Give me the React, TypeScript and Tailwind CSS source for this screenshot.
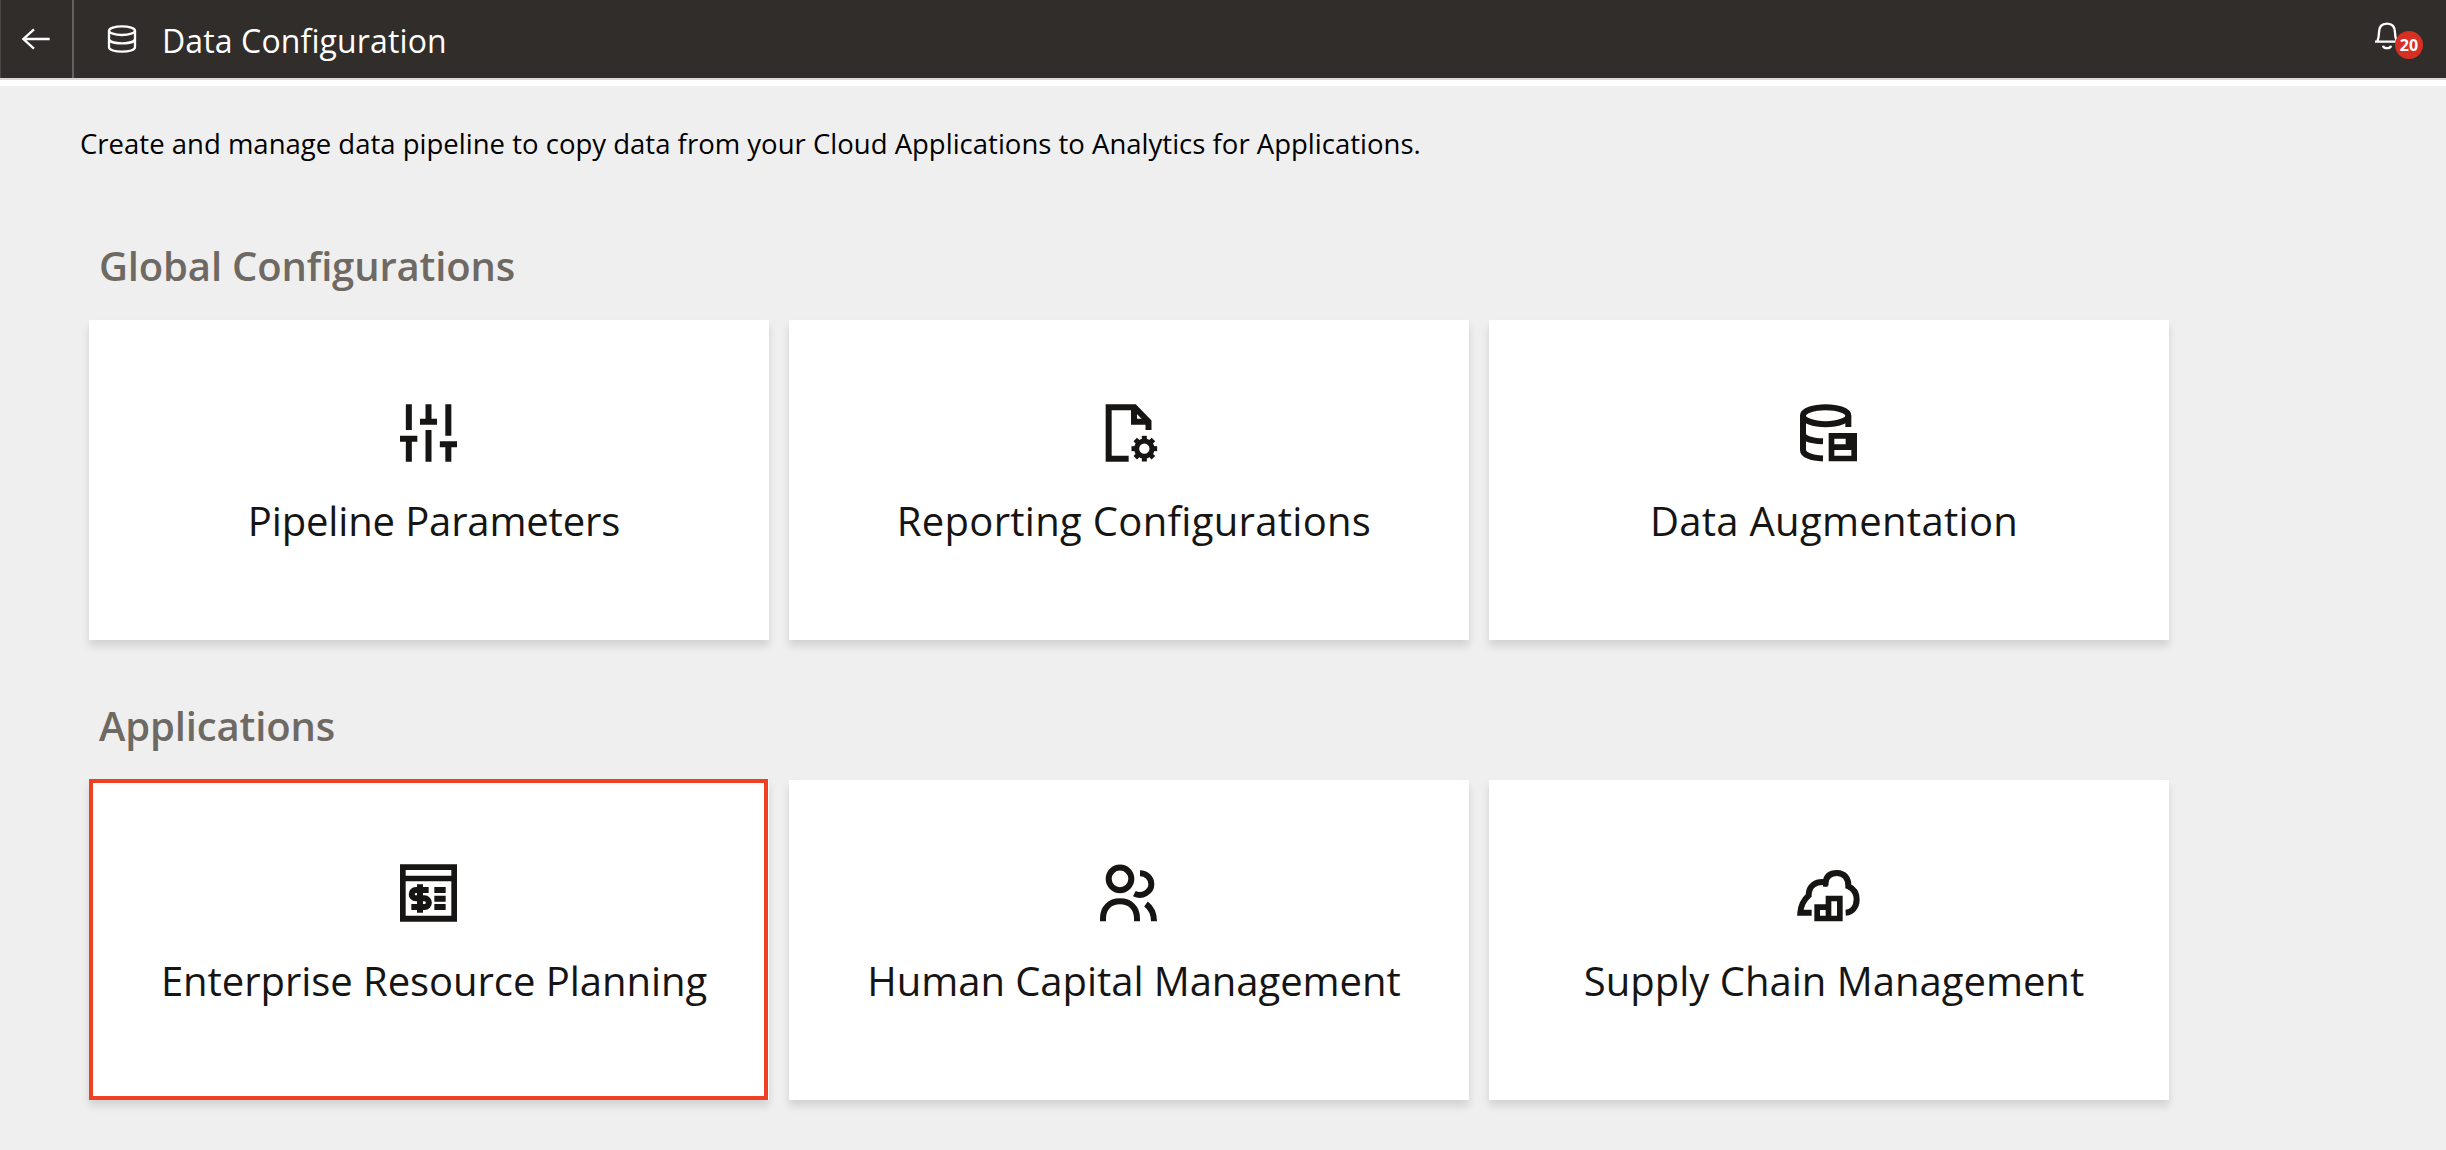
import type { ReactNode } from "react";

type Tile = {
  title: string;
  tracking: string;
  icon: ReactNode;
  highlighted?: boolean;
};

function TileIcon({ children }: { children: ReactNode }) {
  return (
    <svg viewBox="-3 0 300 270" className="h-[90px] w-[100px] text-[#161513]" fill="none" stroke="currentColor" strokeWidth="18" aria-hidden="true">
      {children}
    </svg>
  );
}

const slidersIcon = (
  <TileIcon>
    <path d="M86.500 43V120M86.500 146V215M60 146.500H112M145.500 43V95M120 95H171M145.500 120V215M205 43V137M205 163V215M179.500 163H231" />
  </TileIcon>
);

const gearAngles = [0, 45, 90, 135, 180, 225, 270, 315];

const reportIcon = (
  <TileIcon>
    <path d="M146 206H86V51.500H163.500L205.500 95V120" />
    <path d="M162 55V95H205" />
    <path d="M166 55L205 94" strokeWidth="12" />
    <circle cx="193" cy="176" r="23" strokeWidth="15" />
    {gearAngles.map((a) => (
      <rect key={a} x="185.500" y="137.500" width="15" height="15" fill="currentColor" stroke="none" transform={`rotate(${a} 193 176)`} />
    ))}
  </TileIcon>
);

const databaseCardIcon = (
  <TileIcon>
    <ellipse cx="137" cy="77" rx="68" ry="25.500" />
    <path d="M69 77V180C69 194 92 204 129 205.500M69 132C69 144 92 152.500 129 154M205 77V111" />
    <path d="M146 129H231V214H146ZM163 146V163H197V146ZM163 180V197H214V180Z" fill="currentColor" fillRule="evenodd" stroke="none" />
  </TileIcon>
);

const invoiceIcon = (
  <TileIcon>
    <path d="M60 43H231V215H60ZM77 60V77H214V60ZM77 94V197H214V94Z" fill="currentColor" fillRule="evenodd" stroke="none" />
    <path d="M163 120H197M163 146H197M163 171H197" />
    <path d="M146 120H108C91 120 91 145 108 145H133C151 145 151 171 133 171H94M120 103V188" />
  </TileIcon>
);

const peopleIcon = (
  <TileIcon>
    <circle cx="120" cy="86.500" r="34" />
    <path d="M180 70C199 70 214 84 214 103C214 125 187 143 163 131" />
    <path d="M69 214V205C69 173 90 154 120 154C150 154 171 173 171 205V214" />
    <path d="M198 162C214 174 222 192 222 214" />
  </TileIcon>
);

const cloudChartIcon = (
  <TileIcon>
    <path d="M95 188H61C62 168 72 149 86 136C86 108 108 92 137 97C139 77 152 69 171 69C192 69 206 84 205 109C220 116 230 130 230 148C230 172 216 187 197 188" />
    <path d="M137 98C137 102 136 107 136 110" strokeWidth="14" />
    <path d="M103 163H137V137H188V214H103ZM120 180V197H137V180ZM154 154V197H171V154Z" fill="currentColor" fillRule="evenodd" stroke="none" />
  </TileIcon>
);

const globalTiles: Tile[] = [
  { title: "Pipeline Parameters", tracking: "tracking-[-0.15px]", icon: slidersIcon },
  { title: "Reporting Configurations", tracking: "tracking-[0.3px]", icon: reportIcon },
  { title: "Data Augmentation", tracking: "tracking-[0.3px]", icon: databaseCardIcon },
];

const applicationTiles: Tile[] = [
  { title: "Enterprise Resource Planning", tracking: "tracking-[-0.05px]", icon: invoiceIcon, highlighted: true },
  { title: "Human Capital Management", tracking: "tracking-[-0.05px]", icon: peopleIcon },
  { title: "Supply Chain Management", tracking: "tracking-normal", icon: cloudChartIcon },
];

function TileCard({ tile }: { tile: Tile }) {
  return (
    <button className="relative flex h-80 w-[680px] flex-col items-center gap-[13px] bg-white pt-[70px] shadow-[0_6px_8px_rgba(0,0,0,0.12)]">
      {tile.icon}
      <span className={`pl-[10px] text-[40px] leading-14 whitespace-nowrap text-[#161513] ${tile.tracking}`}>{tile.title}</span>
      {tile.highlighted && <span className="absolute -top-px right-px bottom-0 left-0 border-4 border-[#ef4023]" />}
    </button>
  );
}

function Section({ heading, tiles }: { heading: string; tiles: Tile[] }) {
  return (
    <section>
      <h2 className="mb-[26px] ml-[10px] text-[40px] leading-14 font-semibold tracking-[-0.16px] text-[#6f6963]">{heading}</h2>
      <div className="flex gap-5">
        {tiles.map((tile) => (
          <TileCard key={tile.title} tile={tile} />
        ))}
      </div>
    </section>
  );
}

function Header() {
  return (
    <header className="flex h-20 items-start border-b-2 border-[#d9d9d9] bg-[#312d2a] text-white">
      <button className="h-[78px] w-[74px] border-r-2 border-l border-r-[#65615e] border-l-[#4a4643]" aria-label="Back">
        <svg viewBox="3 0 213 234" className="h-[78px] w-[71px]" fill="none" stroke="currentColor" strokeWidth="7" aria-hidden="true">
          <path d="M149 117H70M102 88L70 117L102 146" />
        </svg>
      </button>
      <svg viewBox="312 0 108 234" className="ml-[30px] h-[78px] w-9" fill="none" stroke="currentColor" strokeWidth="7" aria-hidden="true">
        <ellipse cx="366" cy="92" rx="39" ry="13" />
        <path d="M327 92V142C327 150 345 155 366 155C387 155 405 150 405 142V92M327 116C327 125 345 130 366 130C387 130 405 125 405 116" />
      </svg>
      <h1 className="ml-[22px] text-[32px] leading-[82px] tracking-[0.12px]">Data Configuration</h1>
      <div className="relative mr-[23px] ml-auto h-[78px] w-[51px]">
        <svg viewBox="216 0 84 234" className="h-[78px] w-7" fill="none" stroke="currentColor" strokeWidth="7" aria-hidden="true">
          <path d="M225 125H297M232 124C235 116 237 108 237 98C237 79 247 71 261 71C275 71 285 79 285 98C285 108 287 116 290 124" />
          <path d="M249 137C251 147 271 147 273 137" />
        </svg>
        <span className="absolute top-[31px] right-0 flex size-7 items-center justify-center rounded-full bg-[#d63024] text-base font-bold">20</span>
      </div>
    </header>
  );
}

export default function App() {
  return (
    <div className="flex h-[1150px] w-full flex-col overflow-hidden bg-[#efefef] font-['Open_Sans','Noto_Sans',sans-serif]">
      <Header />
      <main className="border-t-[6px] border-white pt-[38px] pl-20">
        <p className="text-[27.5px] leading-10 tracking-[0.01px] whitespace-nowrap text-black">
          Create and manage data pipeline to copy data from your Cloud Applications to Analytics for Applications.
        </p>
        <div className="mt-[74px] ml-[9px] flex flex-col gap-[58px]">
          <Section heading="Global Configurations" tiles={globalTiles} />
          <Section heading="Applications" tiles={applicationTiles} />
        </div>
      </main>
    </div>
  );
}
